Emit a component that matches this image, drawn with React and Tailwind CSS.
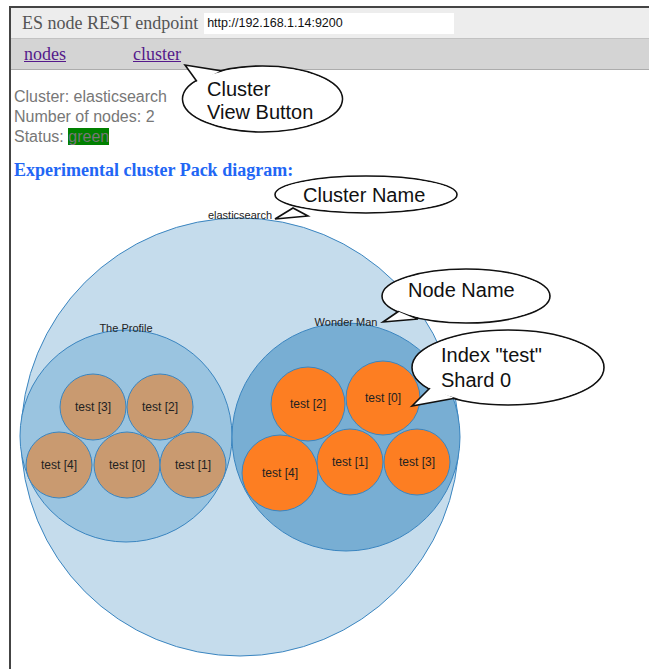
import React from "react";

// Données du diagramme "pack" (coordonnées de la page)
const shards = [
  { label: "test [3]", cx: 93, cy: 407, r: 33, fill: "#c99a70" },
  { label: "test [2]", cx: 160, cy: 407, r: 33, fill: "#c99a70" },
  { label: "test [4]", cx: 59, cy: 465, r: 33, fill: "#c99a70" },
  { label: "test [0]", cx: 127, cy: 465, r: 33, fill: "#c99a70" },
  { label: "test [1]", cx: 193, cy: 465, r: 33, fill: "#c99a70" },
  { label: "test [2]", cx: 308, cy: 404, r: 37, fill: "#fd7e22" },
  { label: "test [0]", cx: 383, cy: 398, r: 37, fill: "#fd7e22" },
  { label: "test [4]", cx: 280, cy: 473, r: 38, fill: "#fd7e22" },
  { label: "test [1]", cx: 350, cy: 462, r: 33, fill: "#fd7e22" },
  { label: "test [3]", cx: 417, cy: 462, r: 33, fill: "#fd7e22" },
];

// Bulles d'annotation
const bubbles = [
  {
    cx: 262.5, cy: 99, rx: 80, ry: 33,
    tail: "185,65 198,83 222,71",
    lines: [{ t: "Cluster", x: 207, y: 96 }, { t: "View Button", x: 207, y: 119 }],
  },
  {
    cx: 366, cy: 194.5, rx: 91, ry: 18.5,
    tail: "275,219 293,208 308,216",
    lines: [{ t: "Cluster Name", x: 303, y: 202 }],
  },
  {
    cx: 466, cy: 296, rx: 84, ry: 27,
    tail: "383,322 399,311 418,319",
    lines: [{ t: "Node Name", x: 408, y: 297 }],
  },
  {
    cx: 508, cy: 367.5, rx: 96, ry: 37.5,
    tail: "412,406 431,387 456,398",
    lines: [{ t: 'Index "test"', x: 441, y: 362 }, { t: "Shard 0", x: 441, y: 387 }],
  },
];

const sans = { fontFamily: '"Liberation Sans", Arial, sans-serif' };

const PackDiagram = () => (
  <svg width="638" height="488" viewBox="11 181 638 488" className="block">
    <circle cx="240" cy="437" r="219" fill="#c5dcec" stroke="#3a85c0" strokeWidth="1" />
    <circle cx="126" cy="436" r="106" fill="#9ac4e0" stroke="#3a85c0" strokeWidth="1" />
    <circle cx="346" cy="437" r="114" fill="#78aed3" stroke="#3a85c0" strokeWidth="1" />
    {shards.map((s, i) => (
      <g key={i}>
        <circle cx={s.cx} cy={s.cy} r={s.r} fill={s.fill} stroke="#3a85c0" strokeWidth="1" />
        <text x={s.cx} y={s.cy + 4} textAnchor="middle" fontSize="12" fill="#222" style={sans}>
          {s.label}
        </text>
      </g>
    ))}
    <text x="240" y="219" textAnchor="middle" fontSize="11" fill="#222" style={sans}>elasticsearch</text>
    <text x="126" y="332" textAnchor="middle" fontSize="11" fill="#222" style={sans}>The Profile</text>
    <text x="346" y="326" textAnchor="middle" fontSize="11" fill="#222" style={sans}>Wonder Man</text>
  </svg>
);

const Callouts = () => (
  <svg width="649" height="669" viewBox="0 0 649 669" className="absolute left-0 top-0 pointer-events-none">
    {bubbles.map((b, i) => (
      <g key={i}>
        <ellipse cx={b.cx} cy={b.cy} rx={b.rx} ry={b.ry} fill="#fff" stroke="#111" strokeWidth="1.6" />
        <polygon points={b.tail} fill="#fff" stroke="#111" strokeWidth="1.6" strokeLinejoin="miter" />
        <ellipse cx={b.cx} cy={b.cy} rx={b.rx - 1.2} ry={b.ry - 1.2} fill="#fff" />
        {b.lines.map((l, j) => (
          <text key={j} x={l.x} y={l.y} fontSize="20" fill="#111" style={sans}>
            {l.t}
          </text>
        ))}
      </g>
    ))}
  </svg>
);

const App = () => {
  return (
    <div className="relative w-[649px] h-[669px] bg-white overflow-hidden">
      {/* Cadre principal */}
      <div className="ml-[9px] mt-[6px] h-[663px] border-l-2 border-t-2 border-[#444]">
        {/* Barre d'en-tête */}
        <div className="h-[31px] bg-[#ededed] border-b border-[#c2c2c2] flex items-center pl-[11px]">
          <span className="text-[18px] text-[#555] font-['Liberation_Serif',serif]">ES node REST endpoint</span>
          <div className="ml-[6px] w-[250px] h-[21px] bg-white flex items-center pl-[3px] text-[12.5px] text-[#111] font-['Liberation_Sans',Arial,sans-serif]">
            http://192.168.1.14:9200
          </div>
        </div>

        {/* Navigation */}
        <div className="h-[31px] bg-[#d4d4d4] border-b border-[#acacac] flex items-center pl-[13px] font-['Liberation_Serif',serif] text-[18px]">
          <a className="text-[#551a8b] underline">nodes</a>
          <a className="ml-[67px] text-[#551a8b] underline">cluster</a>
        </div>

        {/* Informations du cluster */}
        <div className="pl-[3px] pt-[17px] text-[16px] leading-[20px] text-[#777] font-['Liberation_Sans',Arial,sans-serif]">
          <p>Cluster: elasticsearch</p>
          <p>Number of nodes: 2</p>
          <p>
            Status: <span className="bg-[#008000]">green</span>
          </p>
          <h2 className="mt-[12px] text-[18px] leading-[22px] font-bold text-[#2266f5] font-['Liberation_Serif',serif]">
            Experimental cluster Pack diagram:
          </h2>
        </div>

        <PackDiagram />
      </div>

      <Callouts />
    </div>
  );
};

export default App;
